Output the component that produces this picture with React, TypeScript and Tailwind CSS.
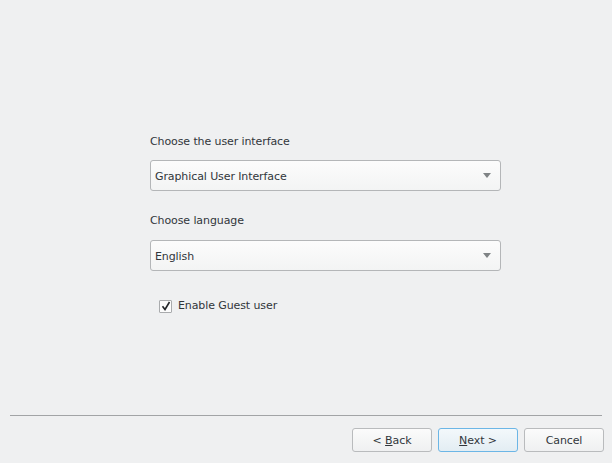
import * as React from 'react';

function Combo({ value }: { value: string }) {
  return (
    <div className="h-[31px] w-[351px] flex items-center justify-between pl-[4px] pr-[9px] border border-[#b4b6b8] rounded-[3px] bg-gradient-to-b from-[#fcfcfc] to-[#f3f4f4]">
      <span className="pt-[3px] text-[11px] tracking-[-0.1px] text-[#31363b]">{value}</span>
      <svg width="8" height="5" viewBox="0 0 8 5"><path d="M0 0h8L4 5z" fill="#7f8385" /></svg>
    </div>
  );
}

function DlgButton({ children, focused }: { children: React.ReactNode; focused?: boolean }) {
  return (
    <button
      className={
        focused
          ? 'h-[24px] w-[80px] pt-[3px] text-[11px] tracking-[-0.1px] text-[#31363b] border border-[#6cb6e6] rounded-[3px] bg-gradient-to-b from-[#f3f8fb] to-[#e3edf3]'
          : 'h-[24px] w-[80px] pt-[3px] text-[11px] tracking-[-0.1px] text-[#31363b] border border-[#b9bbbd] rounded-[3px] bg-gradient-to-b from-[#fbfbfb] to-[#eff0f1]'
      }
    >
      {children}
    </button>
  );
}

export default function App() {
  return (
    <div className="w-[612px] h-[463px] flex flex-col bg-[#eff0f1] text-[#31363b] tracking-[-0.1px]" style={{ fontFamily: '"DejaVu Sans", Verdana, sans-serif' }}>
      <div className="flex-1 flex flex-col pl-[150px] pt-[135px]">
        <div className="text-[11px] leading-[14px]">Choose the user interface</div>
        <div className="mt-[11px]"><Combo value="Graphical User Interface" /></div>
        <div className="mt-[23px] text-[11px] leading-[14px]">Choose language</div>
        <div className="mt-[12px]"><Combo value="English" /></div>
        <label className="mt-[28px] ml-[9px] flex items-center gap-[6px] h-[14px]">
          <span className="w-[13px] h-[13px] border border-[#a9abad] bg-[#fcfcfc] rounded-[1px] flex items-center justify-center">
            <svg width="10" height="10" viewBox="0 0 10 10"><path d="M1.5 5.2 L4 8.5 L8.5 1" fill="none" stroke="#232629" strokeWidth="1.6" /></svg>
          </span>
          <span className="text-[11px]">Enable Guest user</span>
        </label>
      </div>
      <div className="mx-[10px] h-px bg-[#a2a4a6]" />
      <div className="flex justify-end gap-[6px] pr-[8px] pt-[12px] pb-[11px]">
        <DlgButton>&lt; <u>B</u>ack</DlgButton>
        <DlgButton focused><u>N</u>ext &gt;</DlgButton>
        <DlgButton>Cancel</DlgButton>
      </div>
    </div>
  );
}
